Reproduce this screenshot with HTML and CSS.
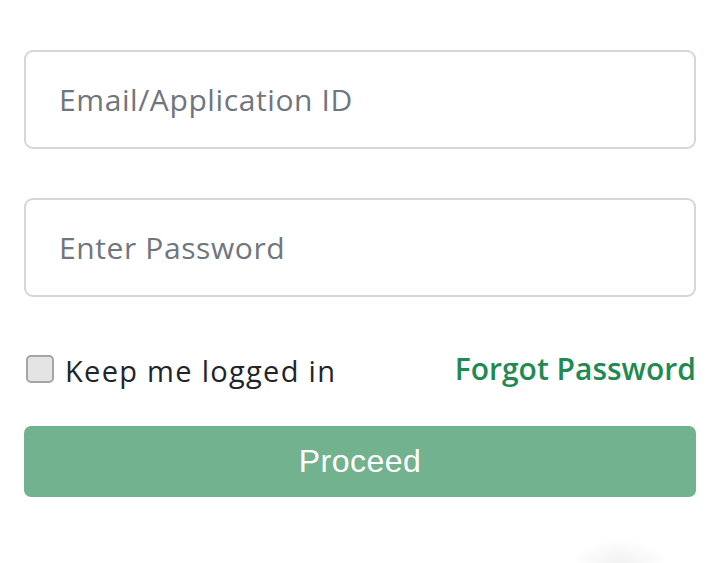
FILE: index.html
```html
<!DOCTYPE html>
<html lang="en">
<head>
<meta charset="utf-8">
<title>Login</title>
<link rel="stylesheet" href="styles.css">
</head>
<body>
<form class="login">
  <input class="field" type="text" placeholder="Email/Application ID">
  <input class="field" type="password" placeholder="Enter Password">
  <div class="row">
    <label class="keep"><span class="box"></span><span class="keep-text">Keep me logged in</span></label>
    <a class="forgot" href="#">Forgot Password</a>
  </div>
  <button class="proceed" type="button">Proceed</button>
</form>
<div class="fab-shadow"></div>
</body>
</html>
```
FILE: styles.css
```css
html, body {
  margin: 0;
  padding: 0;
  background: #fff;
  overflow: hidden;
}
body {
  height: 563px;
  position: relative;
  font-family: "Open Sans", sans-serif;
}
.login {
  display: flex;
  flex-direction: column;
  padding: 50px 24px 0;
}
.field {
  box-sizing: border-box;
  height: 99px;
  width: 100%;
  border: 2px solid #d3d6da;
  border-radius: 9px;
  padding: 0 33px;
  font-family: "Open Sans", sans-serif;
  font-size: 30px;
  letter-spacing: 0.6px;
  color: #212529;
  outline: none;
  margin-bottom: 49px;
}
.field::placeholder {
  color: #6f767d;
}
.row {
  display: flex;
  justify-content: space-between;
  align-items: center;
  height: 50px;
  margin-top: -2px;
  margin-bottom: 32px;
}
.keep {
  display: flex;
  align-items: center;
  font-size: 29px;
  letter-spacing: 1.3px;
  color: #212529;
}
.box {
  width: 24px;
  height: 24px;
  margin: 0 11px 0 2px;
  border: 2px solid #a5a5a5;
  border-radius: 5px;
  background: #e4e4e4;
}
.keep-text {
  position: relative;
  top: 1px;
}
.forgot {
  font-size: 30px;
  color: #1f8a52;
  font-weight: 600;
  text-decoration: none;
  position: relative;
  top: -1px;
}
.proceed {
  height: 71px;
  border: none;
  border-radius: 7px;
  background: #73b28f;
  color: #fff;
  font-family: "Liberation Sans", Arial, sans-serif;
  font-size: 32px;
  letter-spacing: 0.5px;
}
.fab-shadow {
  position: absolute;
  left: 570px;
  top: 538px;
  width: 100px;
  height: 25px;
  background: radial-gradient(ellipse 50% 100% at 50% 100%, rgba(0,0,0,0.05), rgba(0,0,0,0) 100%);
}
```
